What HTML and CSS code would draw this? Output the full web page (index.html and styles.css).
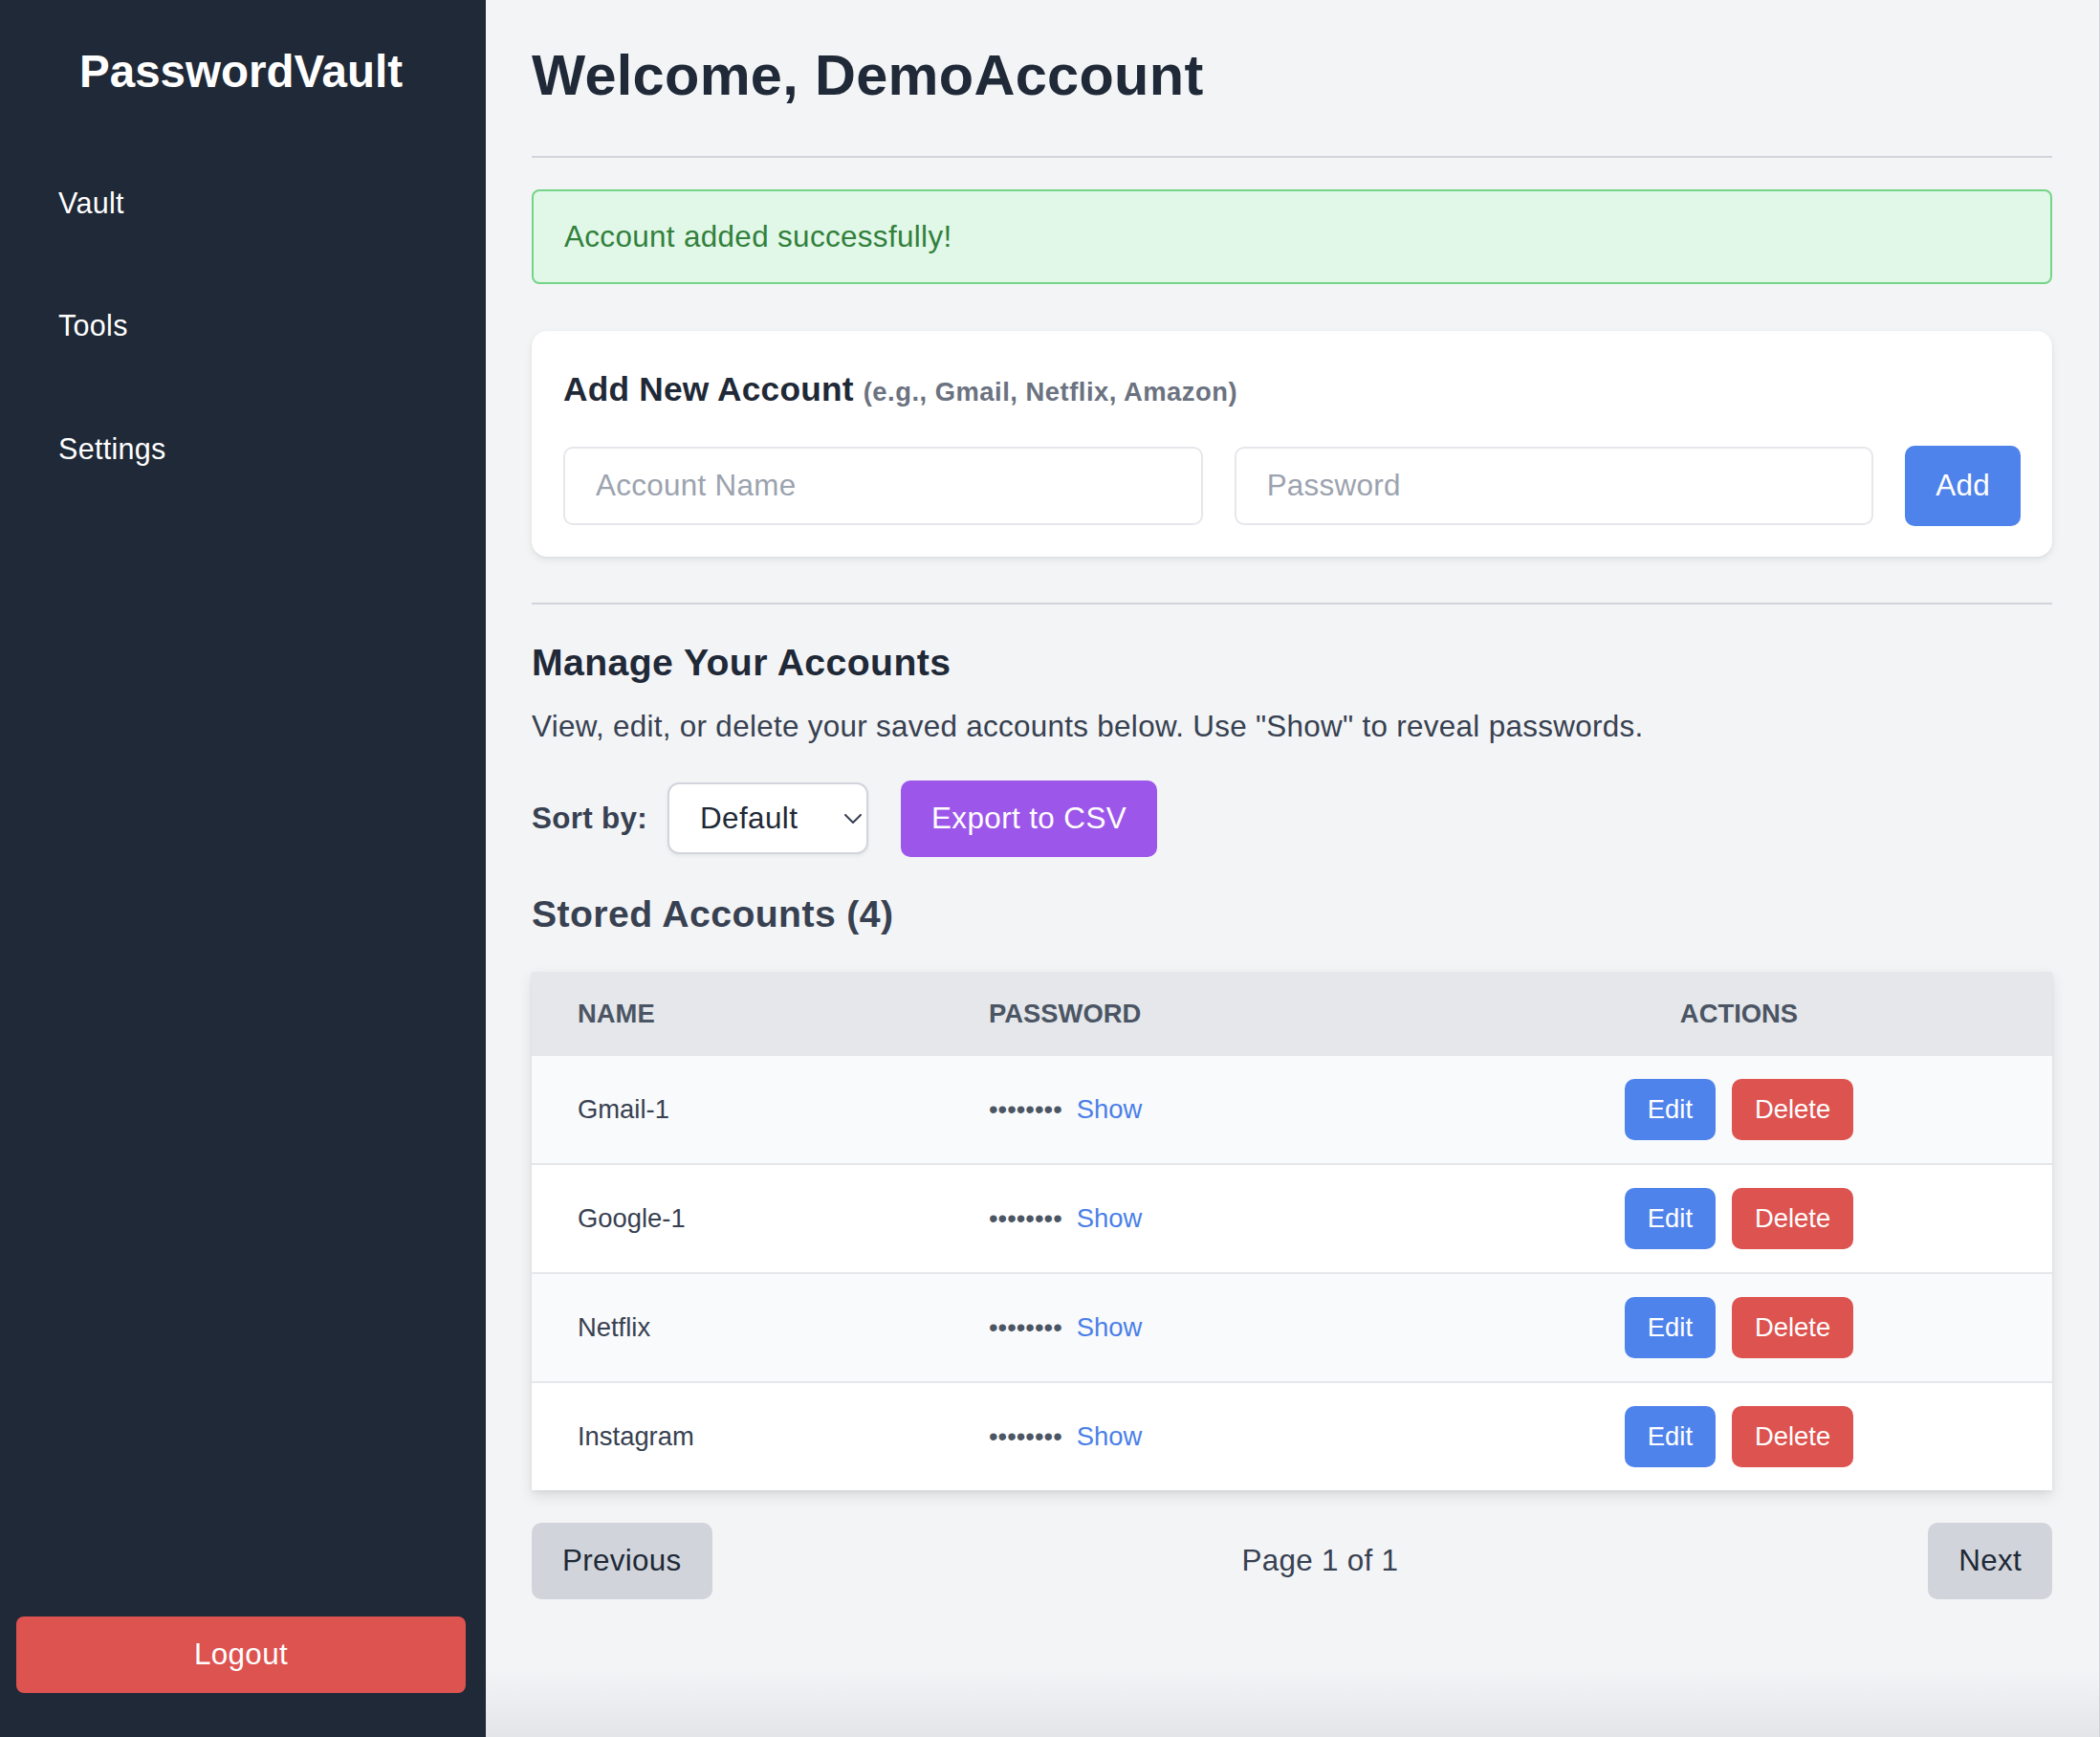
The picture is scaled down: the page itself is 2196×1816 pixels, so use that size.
FILE: index.html
```html
<!DOCTYPE html>
<html lang="en">
<head>
<meta charset="utf-8">
<title>PasswordVault</title>
<link rel="stylesheet" href="styles.css">
</head>
<body>
<div class="app">
  <aside class="sidebar">
    <h1 class="brand">PasswordVault</h1>
    <nav class="nav">
      <a class="nav-link" href="#">Vault</a>
      <a class="nav-link" href="#">Tools</a>
      <a class="nav-link" href="#">Settings</a>
    </nav>
    <button class="logout">Logout</button>
  </aside>
  <main class="main">
    <header class="page-header">
      <h1 class="page-title">Welcome, DemoAccount</h1>
    </header>
    <div class="alert">Account added successfully!</div>
    <section class="card">
      <h2 class="card-title">Add New Account <span class="card-hint">(e.g., Gmail, Netflix, Amazon)</span></h2>
      <form class="add-form">
        <input class="field" type="text" placeholder="Account Name">
        <input class="field" type="password" placeholder="Password">
        <button class="btn btn-blue btn-add" type="button">Add</button>
      </form>
    </section>
    <hr class="divider">
    <section class="manage">
      <h2 class="section-title">Manage Your Accounts</h2>
      <p class="section-desc">View, edit, or delete your saved accounts below. Use "Show" to reveal passwords.</p>
      <div class="controls">
        <span class="sort-label">Sort by:</span>
        <div class="select-wrap">
          <select class="select">
            <option>Default</option>
          </select>
          <svg class="chevron" width="18" height="10" viewBox="0 0 18 10"><path d="M1 1 L9 9 L17 1" fill="none" stroke="#374151" stroke-width="2" stroke-linecap="round" stroke-linejoin="round"/></svg>
        </div>
        <button class="btn btn-purple btn-export">Export to CSV</button>
      </div>
      <h3 class="stored-title">Stored Accounts (4)</h3>
      <div class="table-wrap">
        <table class="accounts">
          <colgroup>
            <col class="col-name">
            <col class="col-pw">
            <col>
          </colgroup>
          <thead>
            <tr>
              <th>NAME</th>
              <th>PASSWORD</th>
              <th class="th-actions">ACTIONS</th>
            </tr>
          </thead>
          <tbody>
            <tr>
              <td>Gmail-1</td>
              <td><span class="dots">••••••••</span><a class="show" href="#">Show</a></td>
              <td><div class="actions"><button class="btn btn-blue btn-sm">Edit</button><button class="btn btn-red btn-sm">Delete</button></div></td>
            </tr>
            <tr>
              <td>Google-1</td>
              <td><span class="dots">••••••••</span><a class="show" href="#">Show</a></td>
              <td><div class="actions"><button class="btn btn-blue btn-sm">Edit</button><button class="btn btn-red btn-sm">Delete</button></div></td>
            </tr>
            <tr>
              <td>Netflix</td>
              <td><span class="dots">••••••••</span><a class="show" href="#">Show</a></td>
              <td><div class="actions"><button class="btn btn-blue btn-sm">Edit</button><button class="btn btn-red btn-sm">Delete</button></div></td>
            </tr>
            <tr>
              <td>Instagram</td>
              <td><span class="dots">••••••••</span><a class="show" href="#">Show</a></td>
              <td><div class="actions"><button class="btn btn-blue btn-sm">Edit</button><button class="btn btn-red btn-sm">Delete</button></div></td>
            </tr>
          </tbody>
        </table>
      </div>
      <div class="pagination">
        <button class="btn btn-gray">Previous</button>
        <span class="page-info">Page 1 of 1</span>
        <button class="btn btn-gray">Next</button>
      </div>
    </section>
  </main>
</div>
</body>
</html>
```

FILE: styles.css
```css
* { box-sizing: border-box; }

html, body {
  margin: 0;
  padding: 0;
}

body {
  font-family: "Liberation Sans", Arial, Helvetica, sans-serif;
  background: #f3f4f6;
  color: #1f2937;
}

.app {
  display: flex;
  height: 1816px;
  overflow: hidden;
}

/* Sidebar */
.sidebar {
  width: 508px;
  flex: none;
  background: #1f2937;
  color: #ffffff;
  display: flex;
  flex-direction: column;
  padding: 43px 21px 46px 17px;
}

.brand {
  margin: 0;
  font-size: 47.5px;
  line-height: 63px;
  font-weight: 700;
  text-align: center;
}

.nav {
  display: flex;
  flex-direction: column;
  gap: 50.5px;
  margin-top: 68px;
}

.nav-link {
  display: block;
  padding: 16px 0 16px 44px;
  font-size: 30.5px;
  line-height: 45.75px;
  letter-spacing: 0.3px;
  color: #ffffff;
  text-decoration: none;
}

.logout {
  margin-top: auto;
  height: 80px;
  width: 100%;
  border: none;
  border-radius: 8px;
  background: #dd5350;
  color: #ffffff;
  font-family: inherit;
  font-size: 31.4px;
  letter-spacing: 0.3px;
}

/* Main */
.main {
  flex: 1;
  padding: 44px 49px 0 48px;
  border-right: 1px solid #d2d3d6;
  background: linear-gradient(to bottom, #f3f4f6 0, #f3f4f6 1745px, #e4e5e8 1816px);
}

.page-header {
  padding-bottom: 49px;
  border-bottom: 2px solid #d1d5db;
}

.page-title {
  margin: 0;
  font-size: 59.5px;
  line-height: 70px;
  font-weight: 700;
  letter-spacing: 0.3px;
  color: #1f2937;
}

.alert {
  margin-top: 33px;
  border: 2px solid #74d488;
  background: #e1f8e8;
  border-radius: 8px;
  padding: 24px 32px;
  font-size: 31.4px;
  line-height: 47px;
  letter-spacing: 0.35px;
  color: #32803c;
}

/* Card */
.card {
  margin-top: 49px;
  background: #ffffff;
  border-radius: 16px;
  padding: 33px;
  box-shadow: 0 3px 8px rgba(0, 0, 0, 0.08), 0 1px 3px rgba(0, 0, 0, 0.05);
}

.card-title {
  margin: 0;
  font-size: 35.3px;
  line-height: 55px;
  font-weight: 700;
  letter-spacing: 0.2px;
  color: #1f2937;
}

.card-hint {
  font-size: 27.4px;
  line-height: 1;
  font-weight: 700;
  letter-spacing: 0.5px;
  color: #6b7280;
}

.add-form {
  display: flex;
  align-items: center;
  gap: 33px;
  height: 82px;
  margin: 33px 0 0 0;
}

.field {
  flex: 1;
  min-width: 0;
  height: 82px;
  border: 2px solid #e5e7eb;
  border-radius: 10px;
  padding: 0 32px;
  font-family: inherit;
  font-size: 31.4px;
  letter-spacing: 0.3px;
  color: #1f2937;
  background: #ffffff;
  outline: none;
}

.field::placeholder {
  color: #9ca3af;
}

.btn {
  border: none;
  font-family: inherit;
  cursor: pointer;
}

.btn-blue { background: #4f83ec; color: #ffffff; }
.btn-red { background: #dd5350; color: #ffffff; }
.btn-purple { background: #9d56ea; color: #ffffff; }
.btn-gray { background: #d1d5db; color: #1f2937; }

.btn-add {
  height: 84px;
  padding: 0 32px;
  border-radius: 10px;
  font-size: 31.4px;
  letter-spacing: 0.3px;
}

.divider {
  margin: 48px 0 0 0;
  border: none;
  border-top: 2px solid #d1d5db;
  height: 0;
}

/* Manage */
.section-title {
  margin: 33px 0 0 0;
  font-size: 39.2px;
  line-height: 55px;
  font-weight: 700;
  letter-spacing: 0.4px;
  color: #1f2937;
}

.section-desc {
  margin: 15.6px 0 0 0;
  font-size: 31.4px;
  line-height: 47px;
  letter-spacing: 0.3px;
  color: #374151;
}

.controls {
  display: flex;
  align-items: center;
  height: 80px;
  margin-top: 33px;
}

.sort-label {
  font-size: 31.4px;
  line-height: 47px;
  font-weight: 700;
  letter-spacing: 0.3px;
  color: #374151;
  margin-right: 21px;
}

.select-wrap {
  position: relative;
  width: 210px;
  height: 75px;
}

.select {
  appearance: none;
  -webkit-appearance: none;
  width: 100%;
  height: 100%;
  border: 2px solid #d1d5db;
  border-radius: 12px;
  background: #ffffff;
  padding: 0 40px 0 32px;
  font-family: inherit;
  font-size: 31.4px;
  letter-spacing: 0.4px;
  color: #1f2937;
  box-shadow: 0 2px 4px rgba(0, 0, 0, 0.06);
  outline: none;
}

.chevron {
  position: absolute;
  right: 7px;
  top: 33px;
  pointer-events: none;
}

.btn-export {
  margin-left: 34px;
  height: 80px;
  padding: 0 32px;
  border-radius: 10px;
  font-size: 31.4px;
  letter-spacing: 0.4px;
}

.stored-title {
  margin: 32px 0 0 0;
  font-size: 39.2px;
  line-height: 55px;
  font-weight: 700;
  letter-spacing: 0.4px;
  color: #374151;
}

/* Table */
.table-wrap {
  margin-top: 33px;
  background: #ffffff;
  box-shadow: 0 6px 14px rgba(0, 0, 0, 0.1), 0 2px 4px rgba(0, 0, 0, 0.05);
}

.accounts {
  width: 100%;
  border-collapse: collapse;
}

.col-name { width: 430px; }
.col-pw { width: 505px; }

.accounts thead tr {
  background: #e5e7eb;
}

.accounts th {
  padding: 24.4px 48px;
  font-size: 27.4px;
  line-height: 39.2px;
  font-weight: 700;
  color: #4b5563;
  text-align: left;
}

.accounts th.th-actions {
  text-align: center;
}

.accounts tbody tr:nth-child(odd) { background: #f9fafb; }
.accounts tbody tr:nth-child(even) { background: #ffffff; }

.accounts tbody tr + tr td {
  border-top: 2px solid #e5e7eb;
}

.accounts td {
  padding: 24px 48px;
  font-size: 27.4px;
  line-height: 39.2px;
  color: #374151;
  vertical-align: middle;
}

.dots {
  color: #4b5563;
}

.show {
  margin-left: 15px;
  color: #4a7fe8;
  text-decoration: none;
}

.actions {
  display: flex;
  justify-content: center;
  gap: 17px;
}

.btn-sm {
  height: 64px;
  padding: 0 24px;
  border-radius: 10px;
  font-size: 27.4px;
}

/* Pagination */
.pagination {
  display: flex;
  justify-content: space-between;
  align-items: center;
  margin-top: 34px;
}

.pagination .btn {
  height: 80px;
  padding: 0 32px;
  border-radius: 10px;
  font-size: 31.4px;
  letter-spacing: 0.3px;
}

.page-info {
  font-size: 31.4px;
  line-height: 47px;
  letter-spacing: 0.3px;
  color: #374151;
}
```
